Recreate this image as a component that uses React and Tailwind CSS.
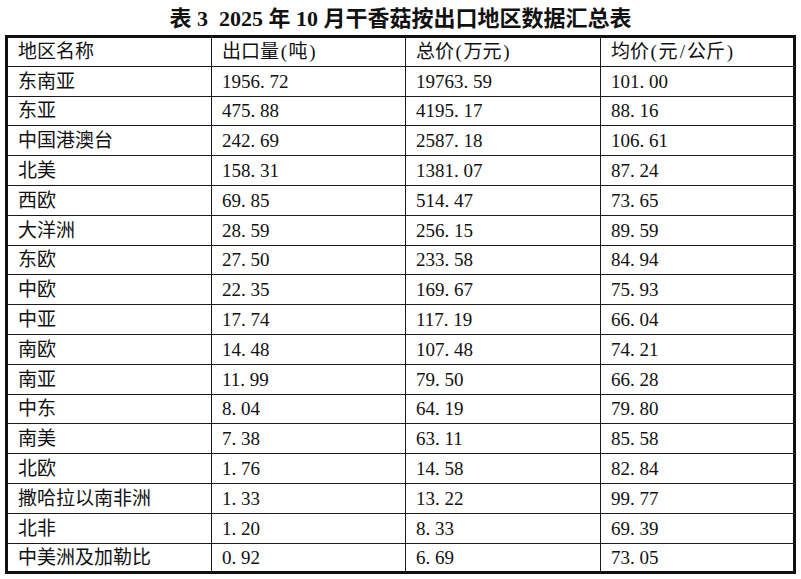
const rows = [
  ['东南亚', '1956.72', '19763.59', '101.00'],
  ['东亚', '475.88', '4195.17', '88.16'],
  ['中国港澳台', '242.69', '2587.18', '106.61'],
  ['北美', '158.31', '1381.07', '87.24'],
  ['西欧', '69.85', '514.47', '73.65'],
  ['大洋洲', '28.59', '256.15', '89.59'],
  ['东欧', '27.50', '233.58', '84.94'],
  ['中欧', '22.35', '169.67', '75.93'],
  ['中亚', '17.74', '117.19', '66.04'],
  ['南欧', '14.48', '107.48', '74.21'],
  ['南亚', '11.99', '79.50', '66.28'],
  ['中东', '8.04', '64.19', '79.80'],
  ['南美', '7.38', '63.11', '85.58'],
  ['北欧', '1.76', '14.58', '82.84'],
  ['撒哈拉以南非洲', '1.33', '13.22', '99.77'],
  ['北非', '1.20', '8.33', '69.39'],
  ['中美洲及加勒比', '0.92', '6.69', '73.05'],
]

// half-width dot like the original's SimSun numerals
function Num({ value }) {
  const [a, b] = value.split('.')
  return (
    <span>
      {a}
      <span className="inline-block w-[0.5em]">.</span>
      {b}
    </span>
  )
}

// header labels: brackets and slash take a half-width cell
function Label({ text }) {
  return (
    <span>
      {text.split('').map((ch, i) =>
        '()/'.includes(ch)
          ? <span key={i} className="inline-block w-[0.5em] text-center">{ch}</span>
          : ch
      )}
    </span>
  )
}

const cell = 'border border-[#1a1a1a] pl-[10px] h-[29.8px] p-0 text-left font-normal align-middle whitespace-nowrap'

export default function App() {
  return (
    <div className="w-[801px] h-[579px] bg-white text-[#111] overflow-hidden" style={{ fontFamily: '"Liberation Serif", "Noto Sans CJK SC", serif' }}>
      <h1 className="h-[35px] flex items-center justify-center text-[22px] font-bold leading-none pt-[3px] whitespace-pre">
        {'表 3  2025 年 10 月干香菇按出口地区数据汇总表'}
      </h1>
      <table className="ml-[5px] w-[791px] table-fixed border-collapse border-[3px] border-[#111] text-[19px] leading-none">
        <colgroup>
          <col className="w-[205px]" />
          <col className="w-[194px]" />
          <col className="w-[195px]" />
          <col />
        </colgroup>
        <thead>
          <tr>
            <th className={cell}>地区名称</th>
            <th className={cell}><Label text="出口量(吨)" /></th>
            <th className={cell}><Label text="总价(万元)" /></th>
            <th className={cell}><Label text="均价(元/公斤)" /></th>
          </tr>
        </thead>
        <tbody>
          {rows.map(([name, qty, total, avg]) => (
            <tr key={name}>
              <td className={cell}>{name}</td>
              <td className={cell}><Num value={qty} /></td>
              <td className={cell}><Num value={total} /></td>
              <td className={cell}><Num value={avg} /></td>
            </tr>
          ))}
        </tbody>
      </table>
    </div>
  )
}
